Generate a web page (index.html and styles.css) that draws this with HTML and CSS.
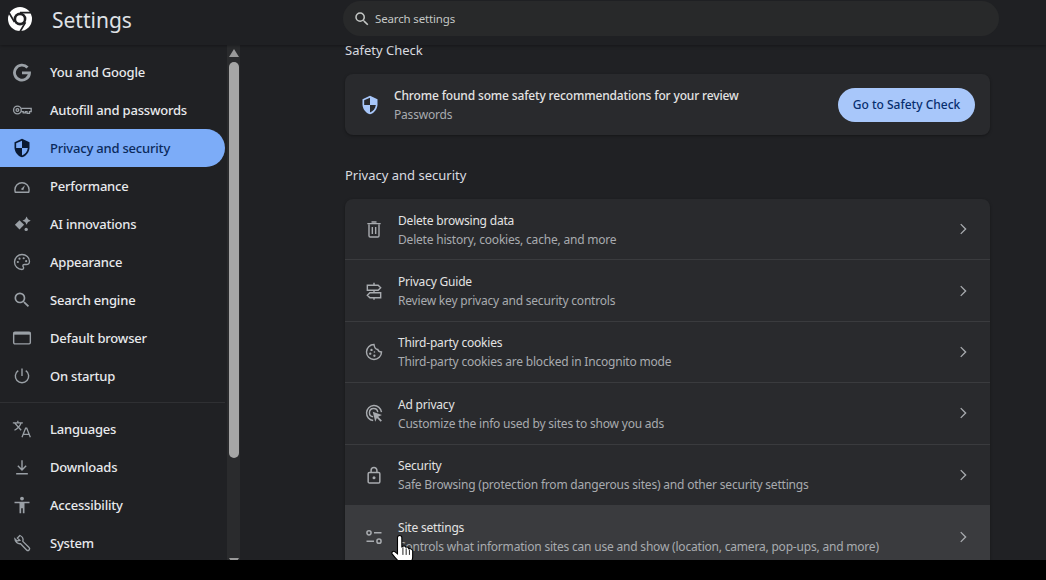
FILE: index.html
```html
<!DOCTYPE html>
<html lang="en">
<head>
<meta charset="utf-8">
<title>Settings</title>
<link rel="stylesheet" href="styles.css">
</head>
<body>
<div class="app">
  <header class="topbar">
    <div class="brand">
      <svg class="logo" viewBox="0 0 24 24"><circle cx="12" cy="12" r="12" fill="#fff"/><circle cx="12" cy="12" r="6.400" fill="#1f2023"/><circle cx="12" cy="12" r="3.800" fill="#fff"/><path d="M12 5.600h12M6.500 15.200.9 5.500M17.500 15.200 11.900 24.800" stroke="#1f2023" stroke-width="1.700" fill="none"/></svg>
      <span class="brand-name">Settings</span>
    </div>
    <div class="search">
      <svg class="search-icon" viewBox="0 0 24 24"><path fill="#c4c7c5" d="M15.5 14h-.79l-.28-.27A6.471 6.471 0 0 0 16 9.5 6.5 6.5 0 1 0 9.5 16c1.61 0 3.09-.59 4.23-1.57l.27.28v.79l5 4.99L20.49 19l-4.99-5zm-6 0C7.01 14 5 11.99 5 9.5S7.01 5 9.5 5 14 7.01 14 9.5 11.99 14 9.5 14z"/></svg>
      <span class="search-text">Search settings</span>
    </div>
  </header>
  <div class="body">
    <aside class="sidebar">
      <nav class="nav">
        <a class="nav-item"><svg class="nav-icon" viewBox="0 0 24 24"><path d="M18.600 6.600A9 9 0 1 0 21 13h-9" fill="none" stroke="#9aa0a6" stroke-width="3.400"/></svg>You and Google</a>
        <a class="nav-item"><svg class="nav-icon" viewBox="0 0 24 24"><g fill="none" stroke="#9aa0a6" stroke-width="1.600"><circle cx="6.500" cy="12" r="4.600"/><circle cx="6.500" cy="12" r="1.600"/><path d="M11 10h12v4h-2v2h-3v-2h-2v1.500h-2.500V14H11"/></g></svg>Autofill and passwords</a>
        <a class="nav-item is-active"><svg class="nav-icon" viewBox="0 0 24 24"><path fill="#0a1a33" d="M12 1 3 5v6c0 5.550 3.840 10.740 9 12 5.160-1.260 9-6.450 9-12V5l-9-4z"/><path fill="#7cacf8" d="M12 11.990h7c-.53 4.120-3.280 7.790-7 8.940V12H5V6.300l7-3.110v8.800z"/></svg>Privacy and security</a>
        <a class="nav-item"><svg class="nav-icon" viewBox="0 0 24 24"><g fill="none" stroke="#9aa0a6" stroke-width="1.700"><path d="M4 19.500h16a9.500 9.500 0 0 0 .5-3A8.500 8.500 0 0 0 3.500 16.500a9.500 9.500 0 0 0 .5 3z"/></g><path d="m10.500 16 5-5-2 6z" fill="#9aa0a6"/></svg>Performance</a>
        <a class="nav-item"><svg class="nav-icon" viewBox="0 0 24 24"><g fill="#9aa0a6"><path d="m9 7.500 5.500 5.500L9 18.500 3.500 13z"/><path d="m17.500 3 1.700 3.300L22.500 8l-3.300 1.700-1.700 3.300-1.700-3.300L12.500 8l3.300-1.700z"/><circle cx="17" cy="18.500" r="2"/></g></svg>AI innovations</a>
        <a class="nav-item"><svg class="nav-icon" viewBox="0 0 24 24"><path fill="none" stroke="#9aa0a6" stroke-width="1.600" d="M12 3a9 9 0 1 0 0 18c1.500 0 2-1 2-1.800 0-1.200-1-1.500-1-2.700 0-1 .8-1.500 1.800-1.500H17c2.500 0 4-1.800 4-4C21 6.500 17 3 12 3z"/><g fill="#9aa0a6"><circle cx="7" cy="12" r="1.300"/><circle cx="9" cy="8" r="1.300"/><circle cx="14" cy="7.500" r="1.300"/><circle cx="17" cy="11" r="1.300"/></g></svg>Appearance</a>
        <a class="nav-item"><svg class="nav-icon" viewBox="0 0 24 24"><path fill="#9aa0a6" d="M15.500 14h-.79l-.28-.27A6.471 6.471 0 0 0 16 9.500 6.500 6.500 0 1 0 9.500 16c1.610 0 3.090-.59 4.230-1.570l.27.28v.79l5 4.990L20.490 19l-4.990-5zm-6 0C7.010 14 5 11.990 5 9.500S7.010 5 9.500 5 14 7.010 14 9.500 11.990 14 9.500 14z"/></svg>Search engine</a>
        <a class="nav-item"><svg class="nav-icon" viewBox="0 0 24 24"><rect x="2" y="5" width="20" height="14" rx="1.500" fill="none" stroke="#9aa0a6" stroke-width="1.700"/><rect x="2" y="5" width="20" height="3" fill="#9aa0a6"/></svg>Default browser</a>
        <a class="nav-item"><svg class="nav-icon" viewBox="0 0 24 24"><path fill="none" stroke="#9aa0a6" stroke-width="1.700" d="M12 3v9M7.500 5.500a8 8 0 1 0 9 0"/></svg>On startup</a>
        <hr class="nav-sep">
        <a class="nav-item"><svg class="nav-icon" viewBox="0 0 24 24"><g fill="none" stroke="#9aa0a6" stroke-width="1.500"><path d="M1 4.500h12M7 2v2.500M3 4.500l8 9M11 4.500c-1 3-3.500 6.500-8 9"/><path d="m12 22 4.300-11h1.400L22 22M13.500 18.500h7"/></g></svg>Languages</a>
        <a class="nav-item"><svg class="nav-icon" viewBox="0 0 24 24"><g fill="none" stroke="#9aa0a6" stroke-width="1.700"><path d="M12 4v11M7 10.500l5 5 5-5M5 20h14"/></g></svg>Downloads</a>
        <a class="nav-item"><svg class="nav-icon" viewBox="0 0 24 24"><g fill="#9aa0a6"><circle cx="12" cy="4.300" r="2.300"/><path d="M3 8h18v2h-6v12h-2v-6h-2v6H9V10H3z"/></g></svg>Accessibility</a>
        <a class="nav-item"><svg class="nav-icon" viewBox="0 0 24 24"><path fill="none" stroke="#9aa0a6" stroke-width="1.600" d="M9.500 3 6.500 6l2.800 2.800L6 9.500 3.500 7a6 6 0 0 0 6.800 5.800l7.200 7.500a1.800 1.800 0 0 0 3-3l-7.500-7.200A6 6 0 0 0 9.500 3z"/></svg>System</a>
      </nav>
      <div class="scrollbar">
        <span class="arrow-up"></span>
        <span class="thumb"></span>
        <span class="arrow-down"></span>
      </div>
    </aside>
    <main class="content">
      <h2 class="section-title first">Safety Check</h2>
      <section class="card safety">
        <svg class="safety-icon" viewBox="0 0 24 24"><path fill="#a8c7fa" d="M12 1 3 5v6c0 5.550 3.840 10.740 9 12 5.160-1.260 9-6.450 9-12V5l-9-4z"/><path fill="#292a2d" d="M12 11.990h7c-.53 4.120-3.280 7.790-7 8.940V12H5V6.300l7-3.110v8.800z"/></svg>
        <div class="row-text">
          <div class="safety-title">Chrome found some safety recommendations for your review</div>
          <div class="row-sub">Passwords</div>
        </div>
        <span class="button">Go to Safety Check</span>
      </section>
      <h2 class="section-title">Privacy and security</h2>
      <section class="card list">
        <div class="row">
          <svg class="row-icon" viewBox="0 0 24 24"><g fill="none" stroke="#a8abaf" stroke-width="1.700"><path d="M6 6.500V20a1.500 1.500 0 0 0 1.500 1.500h9A1.500 1.500 0 0 0 18 20V6.500M4 5.500h16M9 3.500h6M10 9.500V18M14 9.500V18"/></g></svg>
          <div class="row-text"><div class="row-title">Delete browsing data</div><div class="row-sub">Delete history, cookies, cache, and more</div></div>
          <svg class="chevron" viewBox="0 0 24 24"><path d="m9 5.500 6.500 6.500L9 18.500" fill="none" stroke="#a8abaf" stroke-width="1.800"/></svg>
        </div>
        <div class="row">
          <svg class="row-icon" viewBox="0 0 24 24"><g fill="none" stroke="#a8abaf" stroke-width="1.700"><path d="M12 2v3M12 11v3M12 20v2.500M4 5h13l3 3-3 3H4zM20 14H7l-3 3 3 3h13z"/></g></svg>
          <div class="row-text"><div class="row-title">Privacy Guide</div><div class="row-sub">Review key privacy and security controls</div></div>
          <svg class="chevron" viewBox="0 0 24 24"><path d="m9 5.500 6.500 6.500L9 18.500" fill="none" stroke="#a8abaf" stroke-width="1.800"/></svg>
        </div>
        <div class="row">
          <svg class="row-icon" viewBox="0 0 24 24"><path fill="none" stroke="#a8abaf" stroke-width="1.700" d="M12 3a9 9 0 1 0 9 9c-2.500 0-4-1-4.500-3C14.500 9 12.500 6.500 12 3z"/><g fill="#a8abaf"><circle cx="9" cy="9.500" r="1.400"/><circle cx="7.500" cy="14" r="1.400"/><circle cx="12.500" cy="16.500" r="1.400"/><circle cx="12.500" cy="12" r="1"/></g></svg>
          <div class="row-text"><div class="row-title">Third-party cookies</div><div class="row-sub">Third-party cookies are blocked in Incognito mode</div></div>
          <svg class="chevron" viewBox="0 0 24 24"><path d="m9 5.500 6.500 6.500L9 18.500" fill="none" stroke="#a8abaf" stroke-width="1.800"/></svg>
        </div>
        <div class="row">
          <svg class="row-icon" viewBox="0 0 24 24"><g fill="none" stroke="#a8abaf" stroke-width="1.700"><path d="M11 21a9 9 0 1 1 10-10"/><path d="M11 16.500a5 5 0 1 1 5.500-5.500"/></g><path fill="#a8abaf" d="m10.500 10.500 11 4-4.500 2 4.500 4.500-1.500 1.500-4.500-4.500-2 4.500z"/></svg>
          <div class="row-text"><div class="row-title">Ad privacy</div><div class="row-sub">Customize the info used by sites to show you ads</div></div>
          <svg class="chevron" viewBox="0 0 24 24"><path d="m9 5.500 6.500 6.500L9 18.500" fill="none" stroke="#a8abaf" stroke-width="1.800"/></svg>
        </div>
        <div class="row">
          <svg class="row-icon" viewBox="0 0 24 24"><g fill="none" stroke="#a8abaf" stroke-width="1.800"><rect x="5" y="9" width="14" height="12.500" rx="1.500"/><path d="M8.500 9V6.500a3.500 3.500 0 0 1 7 0V9"/></g><circle cx="12" cy="15.200" r="1.800" fill="#a8abaf"/></svg>
          <div class="row-text"><div class="row-title">Security</div><div class="row-sub">Safe Browsing (protection from dangerous sites) and other security settings</div></div>
          <svg class="chevron" viewBox="0 0 24 24"><path d="m9 5.500 6.500 6.500L9 18.500" fill="none" stroke="#a8abaf" stroke-width="1.800"/></svg>
        </div>
        <div class="row is-hover">
          <svg class="row-icon" viewBox="0 0 24 24"><g fill="none" stroke="#a8abaf" stroke-width="1.800"><circle cx="6" cy="7" r="2.500"/><path d="M12 7h9M3 17h9"/><circle cx="18" cy="17" r="2.500"/></g></svg>
          <div class="row-text"><div class="row-title">Site settings</div><div class="row-sub">Controls what information sites can use and show (location, camera, pop-ups, and more)</div></div>
          <svg class="chevron" viewBox="0 0 24 24"><path d="m9 5.500 6.500 6.500L9 18.500" fill="none" stroke="#a8abaf" stroke-width="1.800"/></svg>
        </div>
      </section>
    </main>
  </div>
  <svg class="cursor" viewBox="0 0 24 28"><path fill="#fff" stroke="#000" stroke-width="1" d="M8 1c1 0 2 .8 2 2v8.500l1-.5c1.500-.6 2.500 0 2.800 1 1.200-.6 2.400 0 2.600 1.200 1.300-.5 2.600.2 3.600 1.800v6c0 3-2 5-4 6H9c-2-2-5-5-8-9-.7-1.500.8-3 2.500-2L6 18V3c0-1.200 1-2 2-2z"/><path d="M11 12v7M14 13v6M17 14v5" stroke="#000" stroke-width=".8" fill="none"/></svg>
</div>
</body>
</html>
```
FILE: styles.css
```css
* { box-sizing: border-box; }
html, body { margin: 0; height: 580px; background: #000; overflow: hidden; }
body { font-family: "Noto Sans", "Open Sans", sans-serif; font-size: 12px; color: #e3e3e3; }
.app { position: relative; width: 1046px; height: 560px; background: #202124; overflow: hidden; display: flex; flex-direction: column; }

.topbar { flex: none; height: 45px; display: flex; background: #1f2023; box-shadow: 0 1px 3px rgba(0,0,0,.35); position: relative; z-index: 2; }
.brand { width: 343px; display: flex; align-items: flex-start; gap: 20px; padding: 7px 0 0 8px; }
.logo { width: 24px; height: 24px; }
.brand-name { font-size: 21px; line-height: 26px; color: #dfe1e5; }
.search { width: 656px; height: 35px; margin-top: 1px; border-radius: 18px; background: #28292a; display: flex; align-items: center; padding-left: 10px; gap: 4px; }
.search-icon { width: 18px; height: 18px; }
.search-text { font-size: 11.500px; letter-spacing: -.15px; color: #c4c7c5; }

.body { flex: 1; display: flex; min-height: 0; }
.sidebar { width: 243px; flex: none; display: flex; position: relative; }
.nav { width: 227px; flex: none; padding: 8px 2px 0 0; }
.nav-item { display: flex; align-items: center; height: 38px; padding: 0 0 1px 12px; gap: 18px; border-radius: 0 19px 19px 0; font-size: 13px; letter-spacing: -.2px; font-weight: 500; color: #e8eaed; }
.nav-item.is-active { background: #7cacf8; color: #0b2a5c; }
.nav-icon { width: 20px; height: 20px; flex: none; }
.nav-sep { margin: 7px 0; border: 0; border-top: 1px solid #2f3033; height: 0; }

.scrollbar { width: 13px; background: #2a2b2d; display: flex; flex-direction: column; align-items: center; overflow: hidden; }
.arrow-up { flex: none; margin-top: 4px; border: 5px solid transparent; border-top: 0; border-bottom: 8px solid #9a9a9a; }
.thumb { flex: none; width: 10px; height: 396px; margin-top: 5px; border-radius: 5px; background: #a6a6a6; }
.arrow-down { flex: none; margin-top: 100px; border: 5px solid transparent; border-bottom: 0; border-top: 8px solid #9a9a9a; }

.content { flex: 1; padding: 0 56px 0 102px; min-width: 0; }
.section-title { margin: 0; font-size: 13px; font-weight: 400; line-height: 20px; color: #dadce0; height: 64px; padding-top: 30px; }
.section-title.first { height: 31px; margin-top: -2px; padding-top: 0; line-height: 14px; }
.card { background: #292a2d; border-radius: 8px; box-shadow: 0 1px 3px rgba(0,0,0,.35); }
.safety { height: 61px; display: flex; align-items: center; padding: 0 15px; }
.safety-icon { width: 20px; height: 20px; flex: none; margin-right: 14px; }
.safety-title { font-size: 12px; letter-spacing: -.15px; font-weight: 500; color: #e3e3e3; line-height: 18px; }
.row-text { flex: 1; min-width: 0; display: flex; flex-direction: column; gap: 1px; padding-top: 2px; }
.row-title { font-size: 12px; letter-spacing: -.2px; color: #e3e3e3; line-height: 18px; }
.row-sub { font-size: 12px; letter-spacing: -.2px; color: #a8abaf; line-height: 18px; }
.button { flex: none; width: 137px; height: 34px; text-align: center; border-radius: 17px; background: #a8c7fa; color: #062e6f; font-size: 12px; font-weight: 500; line-height: 34px; }
.list { overflow: hidden; }
.row { height: 61.400px; display: flex; align-items: center; padding: 0 18px 0 19px; gap: 14px; border-bottom: 1px solid #3a3b3e; }
.row.is-hover { background: #3a3b3e; border-bottom: 0; }
.row-icon { width: 20px; height: 20px; flex: none; }
.chevron { width: 18px; height: 18px; flex: none; }
.cursor { position: absolute; left: 391px; top: 534px; width: 26px; height: 31px; z-index: 3; }
```
